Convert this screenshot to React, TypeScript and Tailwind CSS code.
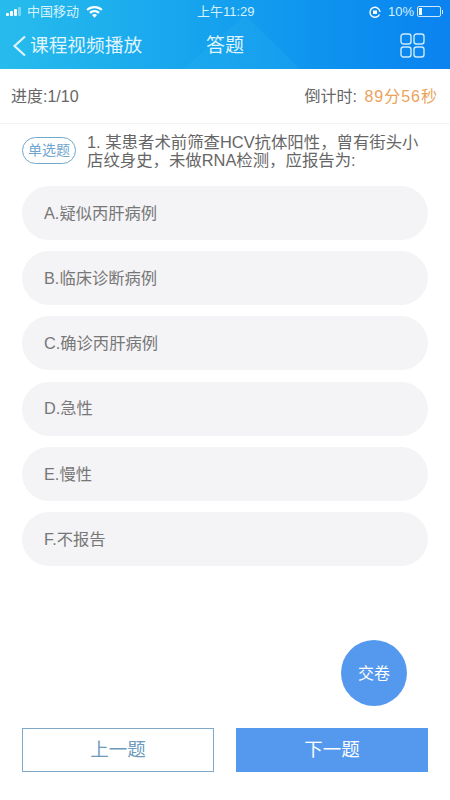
const options = ['A.疑似丙肝病例', 'B.临床诊断病例', 'C.确诊丙肝病例', 'D.急性', 'E.慢性', 'F.不报告']

function StatusBar() {
  return (
    <div className="relative flex h-[23px] items-center justify-between pl-[6px] pr-[7px] text-[13px] text-[#d5f1fc]">
      <div className="flex items-center">
        <div className="flex items-end gap-[1px]">
          <span className="h-[3px] w-[3px] rounded-[1px] bg-white" />
          <span className="h-[5px] w-[3px] rounded-[1px] bg-white" />
          <span className="h-[7px] w-[3px] rounded-[1px] bg-white" />
          <span className="h-[9px] w-[3px] rounded-[1px] bg-white/40" />
        </div>
        <span className="ml-[6px] leading-none">中国移动</span>
        <svg className="ml-[7px]" width="17" height="12" viewBox="0 0 17 12" fill="#fff">
          <path d="M8.5 0C5.3 0 2.5 1.2.4 3.2l1.5 1.6C3.6 3.2 5.9 2.2 8.5 2.2s4.9 1 6.6 2.6l1.5-1.6C14.5 1.2 11.7 0 8.5 0z" />
          <path d="M8.5 4C6.4 4 4.6 4.8 3.2 6.1l1.5 1.6c1-.9 2.3-1.5 3.8-1.5s2.8.6 3.8 1.5l1.5-1.6C12.4 4.8 10.6 4 8.5 4z" />
          <path d="M8.5 8c-1 0-1.9.4-2.5 1L8.5 11.8 11 9c-.6-.6-1.5-1-2.5-1z" />
        </svg>
      </div>
      <span className="absolute left-[197px] top-[4px] text-[13px] leading-[15px]">上午11:29</span>
      <div className="flex items-center">
        <svg width="14" height="14" viewBox="0 0 14 14" fill="none" stroke="#fff" strokeWidth="1.4">
          <path d="M11.5 9.5A5 5 0 1 1 12 7" />
          <rect x="5" y="5.5" width="4" height="3.5" fill="#fff" stroke="none" />
        </svg>
        <span className="ml-[6px] leading-none">10%</span>
        <div className="ml-[3px] flex h-[11px] w-[24px] items-center rounded-[2px] border border-white/80 p-[1px]">
          <span className="h-full w-[3px] bg-white" />
        </div>
        <span className="ml-[1px] h-[4px] w-[1px] bg-white/80" />
      </div>
    </div>
  )
}

function NavBar() {
  return (
    <div className="relative flex h-[46px] items-center text-[#dff4fd]">
      <svg className="ml-[12px]" width="15" height="22" viewBox="0 0 15 22" fill="none" stroke="#dff4fd" strokeWidth="2.2">
        <path d="M13 1.5L2.5 11 13 20.5" />
      </svg>
      <span className="ml-[3px] mt-[1px] text-[18.7px] leading-none">课程视频播放</span>
      <span className="absolute left-[206px] top-[13px] text-[19px] leading-none">答题</span>
      <svg className="absolute left-[400px] top-[10px]" width="25" height="25" viewBox="0 0 25 25" fill="none" stroke="#cfeafb" strokeWidth="1.4">
        <rect x="1" y="1" width="10" height="10" rx="2.5" />
        <rect x="14" y="1" width="10" height="10" rx="2.5" />
        <rect x="1" y="14" width="10" height="10" rx="2.5" />
        <rect x="14" y="14" width="10" height="10" rx="2.5" />
      </svg>
    </div>
  )
}

export default function App() {
  return (
    <div className="flex h-[800px] w-[450px] flex-col overflow-hidden bg-white font-['Liberation_Sans','Noto_Sans_CJK_SC',sans-serif]">
      <header className="relative h-[69px] shrink-0 bg-gradient-to-r from-[#27bcec] via-[#14a0ee] to-[#0b82f0]">
        <svg className="absolute inset-0" width="450" height="69" viewBox="0 0 450 69">
          <polygon points="183,69 245,15 300,69" fill="#3ac0f2" opacity="0.15" />
        </svg>
        <StatusBar />
        <NavBar />
      </header>

      <div className="flex h-[55px] shrink-0 items-center justify-between border-b border-[#f3f3f5] pl-[11px] pr-[12px] pt-[1px] text-[16px] text-[#666]">
        <span>进度:1/10</span>
        <span>
          倒计时: <span className="ml-[3px] tracking-[1px] text-[#eaa45a]">89分56秒</span>
        </span>
      </div>

      <div className="flex shrink-0 items-start pl-[22px] pr-[24px] pt-[9px]">
        <span className="mt-[4px] flex h-[27px] w-[54px] shrink-0 items-center justify-center rounded-full border border-[#6fa9c9] text-[14px] text-[#6fa6cf]">
          单选题
        </span>
        <p className="ml-[11px] text-[16.4px] leading-[18px] text-[#666]">
          1. 某患者术前筛查HCV抗体阳性，曾有街头小店纹身史，未做RNA检测，应报告为:
        </p>
      </div>

      <div className="mt-[17px] flex flex-col gap-[11.2px] px-[22px]">
        {options.map((o) => (
          <div key={o} className="flex h-[54px] items-center rounded-[27px] bg-[#f4f3f6] pl-[22px] text-[16.3px] text-[#777]">
            {o}
          </div>
        ))}
      </div>

      <div className="mt-[74px] flex justify-end pr-[43px]">
        <button className="h-[66px] w-[66px] rounded-full bg-[#5599ee] pt-[2px] text-[16px] text-white">交卷</button>
      </div>

      <div className="mt-[22px] flex gap-[22px] px-[22px]">
        <button className="h-[44px] w-[192px] border border-[#7fa9cb] bg-white text-[18.5px] text-[#6c9abc]">上一题</button>
        <button className="h-[44px] w-[192px] bg-[#5599ee] text-[18.5px] text-white">下一题</button>
      </div>
    </div>
  )
}
